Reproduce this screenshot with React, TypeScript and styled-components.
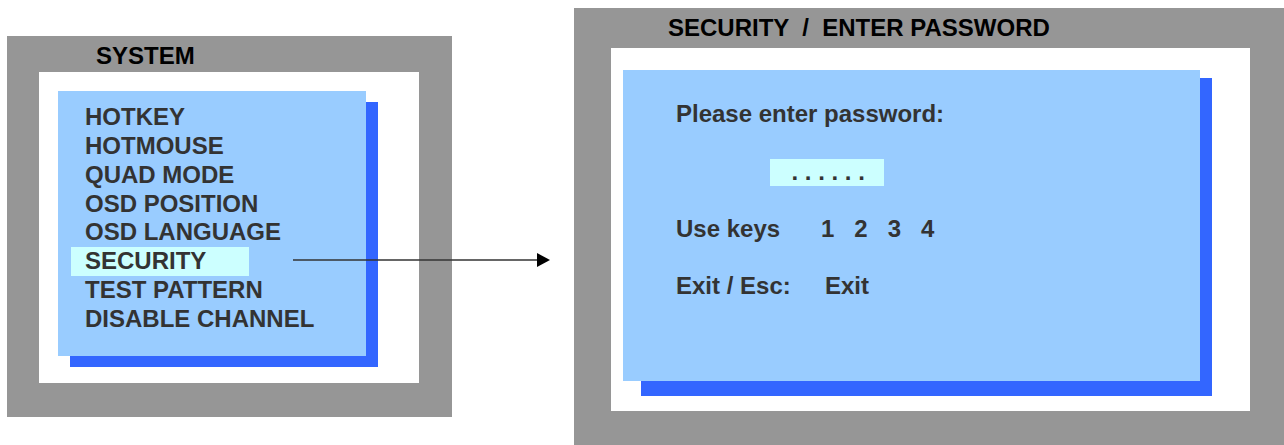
import { FC } from "react";
import styled, { createGlobalStyle } from "styled-components";

const MENU = [
  "HOTKEY",
  "HOTMOUSE",
  "QUAD MODE",
  "OSD POSITION",
  "OSD LANGUAGE",
  "SECURITY",
  "TEST PATTERN",
  "DISABLE CHANNEL",
];

const SELECTED = "SECURITY";

const App: FC = () => {
  return (
    <>
      <GlobalStyle />
      <Page>
        <Frame $width={445} $height={381} $top={36} $left={7}>
          <FrameTitle $height={36} $indent={89} $pad={3}>
            SYSTEM
          </FrameTitle>
          <Screen $width={380} $height={311} $indent={32}>
            <Panel
              $width={308}
              $height={265}
              $margin="19px 0 0 19px"
              $shadow="12px 11px 0 0 #3366ff"
            >
              <Menu>
                {MENU.map((item) => (
                  <MenuItem key={item} $active={item === SELECTED}>
                    {item}
                  </MenuItem>
                ))}
              </Menu>
            </Panel>
          </Screen>
        </Frame>

        <Frame $width={710} $height={437} $top={8} $left={122}>
          <FrameTitle $height={40} $indent={94} $pad={0}>
            {"SECURITY  /  ENTER PASSWORD"}
          </FrameTitle>
          <Screen $width={639} $height={363} $indent={37}>
            <Panel
              $width={577}
              $height={311}
              $margin="22px 0 0 12px"
              $shadow="15px 5px 0 -3px #3366ff, 15px 18px 0 -3px #3366ff"
            >
              <Form>
                <Line>Please enter password:</Line>
                <PasswordBox>{". . . . . ."}</PasswordBox>
                <Row $gap={29}>
                  <Label $width={145}>Use keys</Label>
                  <Keys>
                    <span>1</span>
                    <span>2</span>
                    <span>3</span>
                    <span>4</span>
                  </Keys>
                </Row>
                <Row $gap={29.7}>
                  <Label $width={149}>Exit / Esc:</Label>
                  <span>Exit</span>
                </Row>
              </Form>
            </Panel>
          </Screen>
        </Frame>

        <Arrow width="262" height="16" viewBox="0 0 262 16">
          <line x1="0" y1="8" x2="246" y2="8" stroke="#333" strokeWidth="1.4" />
          <polygon points="244,1 257,8 244,15" fill="#000" />
        </Arrow>
      </Page>
    </>
  );
};

const GlobalStyle = createGlobalStyle`
  html, body {
    margin: 0;
    padding: 0;
    background: #ffffff;
    overflow: hidden;
  }

  body {
    font-family: "Liberation Sans", Arial, sans-serif;
  }
`;

const Page = styled.div`
  position: relative;
  display: flex;
  align-items: flex-start;
  width: 1284px;
  height: 445px;
  overflow: hidden;
`;

const Frame = styled.section<{
  $width: number;
  $height: number;
  $top: number;
  $left: number;
}>`
  display: flex;
  flex-direction: column;
  flex-shrink: 0;
  box-sizing: border-box;
  width: ${(p) => p.$width}px;
  height: ${(p) => p.$height}px;
  margin-top: ${(p) => p.$top}px;
  margin-left: ${(p) => p.$left}px;
  background: #969696;
`;

const FrameTitle = styled.h2<{ $height: number; $indent: number; $pad: number }>`
  box-sizing: border-box;
  margin: 0;
  height: ${(p) => p.$height}px;
  padding: ${(p) => p.$pad}px 0 0 ${(p) => p.$indent}px;
  line-height: ${(p) => p.$height - p.$pad}px;
  font-size: 24px;
  font-weight: bold;
  color: #000000;
  white-space: pre;
`;

const Screen = styled.div<{ $width: number; $height: number; $indent: number }>`
  display: flex;
  align-items: flex-start;
  box-sizing: border-box;
  width: ${(p) => p.$width}px;
  height: ${(p) => p.$height}px;
  margin-left: ${(p) => p.$indent}px;
  background: #ffffff;
`;

const Panel = styled.div<{
  $width: number;
  $height: number;
  $margin: string;
  $shadow: string;
}>`
  box-sizing: border-box;
  width: ${(p) => p.$width}px;
  height: ${(p) => p.$height}px;
  margin: ${(p) => p.$margin};
  background: #99ccff;
  box-shadow: ${(p) => p.$shadow};
  color: #333333;
  font-size: 24px;
  font-weight: bold;
`;

const Menu = styled.ul`
  list-style: none;
  margin: 0;
  padding: 12.3px 0 0 0;
`;

const MenuItem = styled.li<{ $active: boolean }>`
  box-sizing: border-box;
  line-height: 28.8px;
  white-space: nowrap;
  padding-left: ${(p) => (p.$active ? 14 : 27)}px;
  margin-left: ${(p) => (p.$active ? 13 : 0)}px;
  width: ${(p) => (p.$active ? "178px" : "auto")};
  background: ${(p) => (p.$active ? "#ccffff" : "transparent")};
`;

const Form = styled.div`
  display: flex;
  flex-direction: column;
  align-items: flex-start;
  padding: 30px 0 0 53px;
  line-height: 27px;
`;

const Line = styled.div`
  white-space: nowrap;
`;

const PasswordBox = styled.div`
  box-sizing: border-box;
  width: 114px;
  height: 27px;
  margin: 32px 0 0 94px;
  padding-left: 21.5px;
  line-height: 26px;
  background: #ccffff;
  white-space: pre;
`;

const Row = styled.div<{ $gap: number }>`
  display: flex;
  margin-top: ${(p) => p.$gap}px;
  white-space: nowrap;
`;

const Label = styled.span<{ $width: number }>`
  width: ${(p) => p.$width}px;
`;

const Keys = styled.span`
  display: flex;
  gap: 20px;
`;

const Arrow = styled.svg`
  position: absolute;
  left: 293px;
  top: 252px;
`;

export default App;
